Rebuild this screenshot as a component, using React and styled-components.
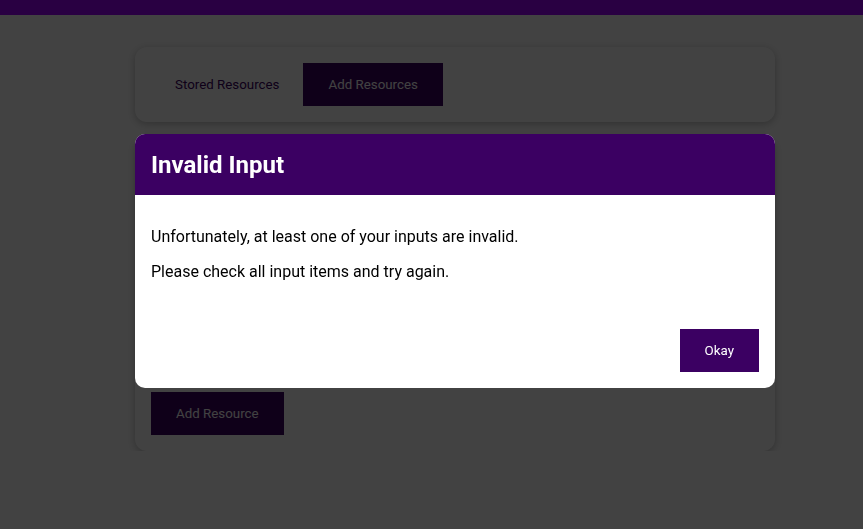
import styled, { createGlobalStyle } from 'styled-components'

const GlobalStyle = createGlobalStyle`
    * {
        box-sizing: border-box;
    }

    body {
        margin: 0;
        font-family: Roboto, "Liberation Sans", sans-serif;
        background: #ffffff;
    }
`

const TopBar = styled.header`
    height: 15px;
    background: #a000ff;
`

const Main = styled.main`
    width: 640px;
    margin: 32px 0 0 135px;
    display: flex;
    flex-direction: column;
    gap: 16px;
`

const Card = styled.section`
    background: #ffffff;
    border-radius: 12px;
    box-shadow: 0 2px 8px rgba(0, 0, 0, 0.26);
    padding: 16px;
`

const Tabs = styled.div`
    display: flex;
    align-items: center;
`

const Button = styled.button`
    font: inherit;
    font-size: 13.33px;
    line-height: 17px;
    padding: 12px 24px;
    border: ${p => (p.$flat ? '0' : '1px solid #3b0062')};
    background: ${p => (p.$flat ? 'transparent' : '#3b0062')};
    color: ${p => (p.$flat ? '#3b0062' : '#ffffff')};
    cursor: pointer;
`

const Form = styled.form`
    display: flex;
    flex-direction: column;
    gap: 16px;
`

// fields of the form sit behind the modal; only their room is kept
const Fields = styled.div`
    height: 222px;
`

const Backdrop = styled.div`
    position: fixed;
    inset: 0;
    background: rgba(0, 0, 0, 0.74);
    z-index: 10;
`

const Modal = styled.div`
    position: fixed;
    top: 134px;
    left: 135px;
    width: 640px;
    background: #ffffff;
    border-radius: 10px;
    overflow: hidden;
    z-index: 20;
`

const ModalHeader = styled.header`
    background: #3b0062;
    padding: 17px 16px 15px;
`

const ModalTitle = styled.h2`
    margin: 0;
    color: #ffffff;
    font-size: 24px;
    line-height: 29px;
    font-weight: 700;
`

const ModalBody = styled.div`
    padding: 16px;
`

const Text = styled.p`
    margin: 16px 0;
    font-size: 16px;
    line-height: 19px;
    color: #000000;
`

const ModalFooter = styled.footer`
    padding: 16px;
    display: flex;
    justify-content: flex-end;
`

export default function App() {
    return (
        <>
            <GlobalStyle />
            <TopBar />
            <Main>
                <Card>
                    <Tabs>
                        <Button $flat>Stored Resources</Button>
                        <Button>Add Resources</Button>
                    </Tabs>
                </Card>
                <Card>
                    <Form>
                        <Fields />
                        <div>
                            <Button type='button'>Add Resource</Button>
                        </div>
                    </Form>
                </Card>
            </Main>
            <Backdrop />
            <Modal>
                <ModalHeader>
                    <ModalTitle>Invalid Input</ModalTitle>
                </ModalHeader>
                <ModalBody>
                    <Text>Unfortunately, at least one of your inputs are invalid.</Text>
                    <Text>Please check all input items and try again.</Text>
                </ModalBody>
                <ModalFooter>
                    <Button>Okay</Button>
                </ModalFooter>
            </Modal>
        </>
    )
}
